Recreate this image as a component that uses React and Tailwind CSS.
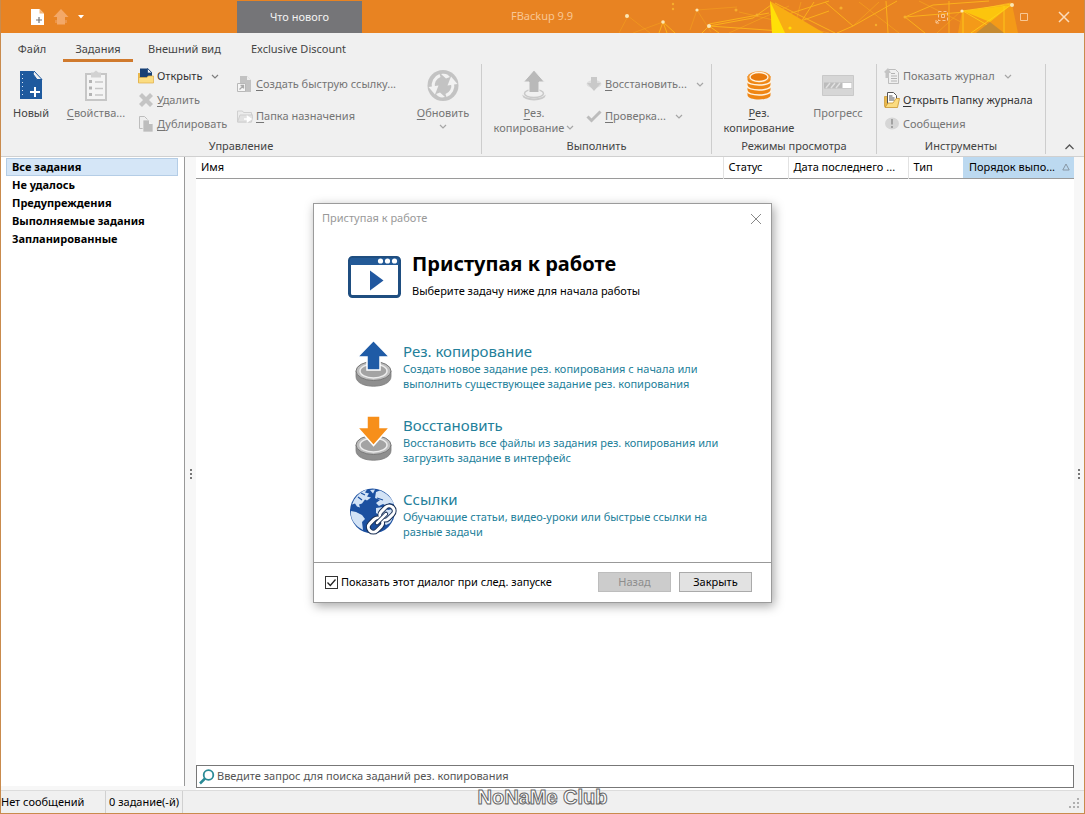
import React, { useState } from "react";

const smallIcon = "w-4 h-4 shrink-0";

const ChevronDown = ({ className = "" }) => (
  <svg viewBox="0 0 8 5" className={`w-2 h-[5px] shrink-0 ${className}`} fill="none" stroke="currentColor" strokeWidth="1.2">
    <path d="M1 1l3 3 3-3" />
  </svg>
);

const NewIcon = () => (
  <svg viewBox="0 0 32 32" className="w-8 h-8">
    <path d="M5 1h13l9 9v19H5z" fill="#1f5a9e" />
    <path d="M19 1l8 8.500h-5l-4-5.500z" fill="#f0f0f0" stroke="#1f5a9e" strokeWidth="1" />
    <path d="M7.500 4v24" stroke="#dfe8f3" strokeWidth="1" strokeDasharray="1 3" />
    <path d="M20 17v10M15 22h10" stroke="#fff" strokeWidth="2" />
  </svg>
);

const PropertiesIcon = () => (
  <svg viewBox="0 0 32 32" className="w-8 h-8" fill="none" stroke="#c6c6c6">
    <path d="M6 4h20v26H6z" fill="#f4f4f4" strokeWidth="2" />
    <path d="M11 2.500h2.500L16 .5l2.500 2H21v5H11z" fill="#d2d2d2" stroke="none" />
    <path d="M9 10h3v3H9zM9 16.500h3v3H9zM9 23h3v3H9z" fill="#b4b4b4" stroke="none" />
    <path d="M15 12h8M15 18.500h8M15 25h8" strokeWidth="1.300" />
  </svg>
);

const OpenIcon = () => (
  <svg viewBox="0 0 16 16" className={smallIcon}>
    <path d="M0 5h5l1 2v8H1L0 14z" fill="#e9b84c" />
    <path d="M2 .5h8l4 4V11H2z" fill="#163f75" />
    <path d="M9.500.5v4.500H14z" fill="#eef3f9" stroke="#163f75" strokeWidth=".7" />
    <path d="M.5 9.500h8l2-1.500h5V15H.5z" fill="#fbdc81" stroke="#dfae45" strokeWidth=".7" />
  </svg>
);

const DeleteIcon = () => (
  <svg viewBox="0 0 16 16" className={smallIcon}>
    <path d="M4 1l4 4 4-4 3 3-4 4 4 4-3 3-4-4-4 4-3-3 4-4-4-4z" fill="#c4c4c4" />
  </svg>
);

const DuplicateIcon = () => (
  <svg viewBox="0 0 16 16" className={smallIcon}>
    <path d="M1.500.5h5l3 3v9h-8z" fill="#eee" stroke="#bdbdbd" />
    <path d="M5 4h6l4 4v8H5z" fill="#bdbdbd" stroke="#f0f0f0" strokeWidth=".7" />
    <path d="M11 4v4h4z" fill="#f3f3f3" />
  </svg>
);

const ShortcutIcon = () => (
  <svg viewBox="0 0 16 16" className={smallIcon}>
    <path d="M3 0h7l4 4v12H3z" fill="#c2c2c2" />
    <path d="M10 0v4h4z" fill="#eee" />
    <path d="M.5 7.500h8v8h-8z" fill="#f6f6f6" stroke="#b8b8b8" />
    <path d="M2.500 13.500L6 10M3.500 9.500h3v3" fill="none" stroke="#aaa" strokeWidth="1.300" />
  </svg>
);

const TargetFolderIcon = () => (
  <svg viewBox="0 0 16 16" className={smallIcon}>
    <path d="M.5 3h5l1 1.500h8V14H.5z" fill="#ececec" stroke="#d0d0d0" />
    <path d="M.5 14L3 7h13l-1.500 7z" fill="#e2e2e2" stroke="#cfcfcf" />
    <path d="M7 11h5M10.500 8.500L14 11l-3.500 2.500z" fill="#fff" stroke="#fff" strokeWidth="1.500" />
  </svg>
);

const RefreshIcon = () => (
  <svg viewBox="0 0 32 32" className="w-8 h-8">
    <circle cx="16" cy="15.500" r="15.500" fill="#c3c3c3" />
    <path d="M13 5.500A10.500 10.500 0 0 0 6.500 18" fill="none" stroke="#f2f2f2" strokeWidth="3" />
    <path d="M1.500 17l10-1.500-3.500 9z" fill="#f2f2f2" />
    <path d="M19 25.500A10.500 10.500 0 0 0 25.500 13" fill="none" stroke="#f2f2f2" strokeWidth="3" />
    <path d="M30.500 14l-10 1.500 3.500-9z" fill="#f2f2f2" />
    <path d="M14 4c4-1 7 0 9 3l-4 1.500zM18 27c-4 1-7 0-9-3l4-1.500z" fill="#f2f2f2" />
  </svg>
);

const BackupGrayIcon = () => (
  <svg viewBox="0 0 32 32" className="w-8 h-8">
    <ellipse cx="16" cy="25.500" rx="11.500" ry="5" fill="#c9c9c9" />
    <ellipse cx="16" cy="23.500" rx="11.500" ry="5" fill="#f0f0f0" />
    <ellipse cx="16" cy="23.500" rx="9.500" ry="4" fill="none" stroke="#c9c9c9" strokeWidth="1.500" />
    <path d="M16 0l10.500 12H21v10.500H11V12H5.500z" fill="#b9b9b9" stroke="#f0f0f0" />
  </svg>
);

const RestoreGrayIcon = () => (
  <svg viewBox="0 0 16 16" className={smallIcon}>
    <ellipse cx="8" cy="8" rx="7.500" ry="4" fill="#dedede" />
    <path d="M5 1h6v6h4l-7 8-7-8h4z" fill="#c9c9c9" />
  </svg>
);

const CheckGrayIcon = () => (
  <svg viewBox="0 0 16 16" className={smallIcon}>
    <path d="M1.500 8.500l4 4L14.500 3.500" fill="none" stroke="#bcbcbc" strokeWidth="3" />
  </svg>
);

const DatabaseIcon = () => (
  <svg viewBox="0 0 32 32" className="w-8 h-8">
    <path d="M4.500 6v19c0 6 23 6 23 0V6z" fill="#ef8614" />
    <g fill="none" stroke="#fff3e0" strokeWidth="1.500">
      <path d="M4 10.500c0 6 24 6 24 0M4 15.500c0 6 24 6 24 0M4 20.500c0 6 24 6 24 0" />
    </g>
    <ellipse cx="16" cy="7" rx="11.500" ry="5.800" fill="#f2962f" />
    <ellipse cx="16" cy="7" rx="9" ry="4.500" fill="#e87a0c" stroke="#fff3e0" strokeWidth="1.300" />
  </svg>
);

const ProgressIcon = () => (
  <svg viewBox="0 0 32 32" className="w-8 h-8">
    <path d="M.5 5.500h31v20H.5z" fill="#d6d6d6" stroke="#c9c9c9" />
    <path d="M2 12.500h28v6H2z" fill="#bcbcbc" />
    <path d="M4 18l4-5M9 18l4-5M14 18l4-5" stroke="#e0e0e0" strokeWidth="1.500" />
    <path d="M20.500 13h9v5h-9z" fill="#fff" />
  </svg>
);

const LogIcon = () => (
  <svg viewBox="0 0 16 16" className={smallIcon}>
    <path d="M4.500 1.500h7l3 3v11h-10z" fill="#efefef" stroke="#bdbdbd" />
    <path d="M7 5.500h4M7 8h6M7 10.500h6M7 13h6" stroke="#b4b4b4" />
    <path d="M4 0L0 4l1.500 1v5H5V5h2z" fill="#c4c4c4" />
  </svg>
);

const LogFolderIcon = () => (
  <svg viewBox="0 0 16 16" className={smallIcon}>
    <path d="M.5 4.500h3v10h-3z" fill="#e9b84c" stroke="#c9952f" strokeWidth=".7" />
    <path d="M3.500.5h6l3 3v9h-9z" fill="#fff" stroke="#555" />
    <path d="M5 4h3.500M5 6h5.500M5 8h5.500" stroke="#555" />
    <path d="M1 15.500L4 11h5l3-4.500h3.500L13.500 15.500z" fill="#fbdc81" stroke="#c9952f" strokeWidth=".8" />
  </svg>
);

const MessageIcon = () => (
  <svg viewBox="0 0 16 16" className={smallIcon}>
    <ellipse cx="8" cy="7.500" rx="7" ry="6" fill="#d6d6d6" />
    <path d="M8 3v5.500M8 10v2" stroke="#a2a2a2" strokeWidth="2" />
  </svg>
);

const GettingStartedIcon = () => (
  <svg viewBox="0 0 53 42" className="w-[53px] h-[42px] shrink-0">
    <rect x="1.500" y="1.500" width="50" height="39" rx="3" fill="#fff" stroke="#1f4e80" strokeWidth="3" />
    <path d="M2 3.500Q2 2 3.500 2h46Q51 2 51 3.500V9H2z" fill="#235a97" />
    <circle cx="32.500" cy="5" r="2.600" fill="#fff" />
    <circle cx="39.500" cy="5" r="2.600" fill="#fff" />
    <circle cx="46.500" cy="5" r="2.600" fill="#fff" />
    <path d="M22 14.500v20l13.500-10z" fill="#2158a0" />
  </svg>
);

const Disk = () => (
  <g>
    <path d="M7 31v5.500c0 13 35 13 35 0V31z" fill="#8f8f8f" stroke="#7b7b7b" strokeWidth=".8" />
    <ellipse cx="24.500" cy="31" rx="17.500" ry="9.500" fill="#bdbdbd" stroke="#777" />
    <ellipse cx="24.500" cy="31" rx="13.500" ry="7" fill="#a3a3a3" stroke="#ececec" strokeWidth="1.500" />
  </g>
);

const BackupIcon = () => (
  <svg viewBox="0 0 48 48" className="w-12 h-12 shrink-0">
    <Disk />
    <path d="M24.500.5L40.500 17H31v13H18V17H8.500z" fill="#1f5ba6" stroke="#fff" strokeWidth="1.500" />
  </svg>
);

const RestoreIcon = () => (
  <svg viewBox="0 0 48 48" className="w-12 h-12 shrink-0">
    <Disk />
    <path d="M24.500 31.500L8.500 13.500H18V2h13v11.500h9.500z" fill="#f78f1a" stroke="#fff" strokeWidth="1.500" />
  </svg>
);

const LinksIcon = () => (
  <svg viewBox="0 0 48 48" className="w-12 h-12 shrink-0">
    <circle cx="23.500" cy="23" r="22.500" fill="#1c50a0" />
    <g fill="#d3e3f6">
      <path d="M5 12C9 6 13 3 18 1.500l-2 3 4 1-2 3 4 1-4 3-2-1-3 4-3 1 1 3-3-1-2-3-3 1z" />
      <path d="M2 23l5 1 6 3 3 4-3 3 1 8C6 38 1 31 2 23z" />
      <path d="M27 4l4-1.500C37 5 42 9 45 16l-5-1-2 3-4-2-4 2-3-3 4-3-5-2z" />
      <path d="M27 20l7-1 5 3 5-1c1 5 0 10-3 14l-4 2-4-4-1-5-5-3z" />
      <path d="M21 2l5-.5-2 4z" />
    </g>
    <path d="M12 5l4 2M28 10l6 2M9 9l4 3" stroke="#1c50a0" strokeWidth="1.200" />
    <g fill="none">
      <g stroke="#1b3156" strokeWidth="5">
        <rect x="33" y="17" width="10" height="16" rx="5" transform="rotate(45 38 25)" />
        <rect x="21.500" y="29" width="10" height="16" rx="5" transform="rotate(45 26.500 37)" />
      </g>
      <g stroke="#fff" strokeWidth="3">
        <rect x="33" y="17" width="10" height="16" rx="5" transform="rotate(45 38 25)" />
        <rect x="21.500" y="29" width="10" height="16" rx="5" transform="rotate(45 26.500 37)" />
      </g>
      <path d="M28 35l9-9" stroke="#1b3156" strokeWidth="4.500" strokeLinecap="round" />
      <path d="M28 35l9-9" stroke="#fff" strokeWidth="2.500" strokeLinecap="round" />
    </g>
  </svg>
);

const TitleArt = () => (
  <svg viewBox="0 0 465 33" className="absolute right-0 top-0 w-[465px] h-[33px]" fill="none">
    <g stroke="#fbb01c" strokeWidth="1">
      <path d="M0 33l9-17 22 17M44 22l-30 11M78 10l-7 20M78 10l14 22M78 10l40-3" opacity=".4" />
      <path d="M40 33l4-11 4 11M44 22l12 11M90 26l44-8 18-13M90 26l72 5M90 26l-7 7M90 26l10 7M90 24l60-11" />
      <path d="M162 28l48-17M156 3l60 30M175 33l20-31M160 17l50-16M206 2l28 24 44-25M234 26l-16 7M267 1l2 32M286 17l28-12 56-4M286 17l20 16M286 17l60-5 46-9M330 1v32" />
      <path d="M110 33l60-27M120 12l90 21M182 2l-8 30M240 2l40 31M300 1l60 30M318 33l24-22M234 26l26-24" opacity=".5" />
    </g>
    <path d="M151 1l54 32h-52z" fill="#f8ad13" />
    <path d="M151 1l15 32h-13z" fill="#ffe007" />
    <path d="M343 11l50-7 6 29h-60z" fill="#f49a18" />
    <path d="M344 11l48-6-21 17z" fill="#fcc50d" />
    <path d="M344 11v22M385 6v27M344 11l38 22M392 5l-40 28M343 11l50-7" stroke="#ffd21c" strokeWidth=".8" />
    <path d="M371 22l14 11h-28z" fill="#c58a32" />
    <g fill="#fbe7b6">
      <circle cx="8" cy="16" r="2" />
      <circle cx="44" cy="22" r="1.800" />
      <circle cx="78" cy="10" r="1.600" />
      <circle cx="90" cy="26" r="2" />
      <circle cx="343" cy="11" r="1.600" />
      <circle cx="393" cy="5" r="2" />
    </g>
    <g fill="#f6ae2d">
      <circle cx="54" cy="4" r="1.200" />
      <circle cx="54" cy="9" r="1.200" />
      <circle cx="117" cy="10" r="1.500" />
      <circle cx="138" cy="15" r="1.500" />
      <circle cx="222" cy="8" r="1.600" />
      <circle cx="286" cy="17" r="1.500" />
      <circle cx="257" cy="25" r="1.200" />
      <circle cx="171" cy="28" r="1.600" fill="#ffe007" />
    </g>
  </svg>
);

// first letter is the keyboard mnemonic
const Mnemonic = ({ text }) => (
  <span>
    <span className="underline underline-offset-2">{text[0]}</span>
    {text.slice(1)}
  </span>
);

const LargeButton = ({ icon, children, disabled, className = "" }) => (
  <button
    type="button"
    disabled={disabled}
    className={`flex flex-col items-center shrink-0 pt-1.5 leading-[15px] text-[#444] disabled:text-[#757575] ${className}`}
  >
    <span className="mb-[3px]">{icon}</span>
    {children}
  </button>
);

const RowButton = ({ icon, children, disabled, arrow, className = "h-6" }) => (
  <button
    type="button"
    disabled={disabled}
    className={`flex items-center gap-[3px] whitespace-nowrap text-[#333] disabled:text-[#757575] ${className}`}
  >
    {icon}
    {children}
    {arrow && <ChevronDown className="ml-1.5 opacity-60" />}
  </button>
);

const RibbonGroup = ({ title, children, className = "" }) => (
  <section className={`flex flex-col shrink-0 border-r border-[#cdcdcd] ${className}`}>
    <div className="flex h-[74px]">{children}</div>
    <h2 className="h-4 leading-4 text-center text-[#444]">{title}</h2>
  </section>
);

const TitleBar = () => (
  <header className="relative flex items-stretch h-[33px] shrink-0 bg-[#e88322] text-[#f8c795]">
    <TitleArt />
    <div className="flex items-center w-[236px] pl-[30px] gap-2 shrink-0">
      <button type="button" aria-label="Новое задание">
        <svg viewBox="0 0 13 16" className="w-[13px] h-4">
          <path d="M0 0h8.500L13 4.500V16H0z" fill="#fff" />
          <path d="M8.500 0v4.500H13z" fill="#f3b77c" />
          <path d="M8 8v6M5 11h6" stroke="#777" strokeWidth="1.200" />
        </svg>
      </button>
      <button type="button" aria-label="Запуск">
        <svg viewBox="0 0 18 16" className="w-[18px] h-4">
          <path d="M3 11h12v3H3z" fill="#ec9548" />
          <path d="M9 0l7.500 8H13v7.500H5V8H1.500z" fill="#f3a868" />
        </svg>
      </button>
      <button type="button" aria-label="Настройка панели">
        <svg viewBox="0 0 6 4" className="w-[6px] h-1">
          <path d="M0 0h6L3 3.500z" fill="#fff" />
        </svg>
      </button>
    </div>
    <button type="button" className="w-[125px] shrink-0 mt-px bg-[#757578] text-[#f2f2f2]">
      Что нового
    </button>
    <h1 className="relative flex-1 flex items-center pl-[149px]">FBackup 9.9</h1>
    <div className="relative flex items-center gap-[30px] pr-[14px]">
      <button type="button" aria-label="Свернуть">
        <svg viewBox="0 0 14 14" className="w-[14px] h-[14px]" fill="none" stroke="#f8c795">
          <path d="M3.500 1.500h9v9h-9z" strokeDasharray="3 2" />
          <path d="M6.500 4.500h3v3h-3zM1 13l3-3M1 10v3h3" />
        </svg>
      </button>
      <span className="w-[11px]" />
      <button type="button" aria-label="Развернуть">
        <svg viewBox="0 0 8 8" className="w-2 h-2" fill="none" stroke="#f8c795">
          <path d="M.5.5h7v7h-7z" />
        </svg>
      </button>
      <button type="button" aria-label="Закрыть окно">
        <svg viewBox="0 0 12 12" className="w-3 h-3" fill="none" stroke="#fbdcbc" strokeWidth="1.500">
          <path d="M1 1l10 10M11 1L1 11" />
        </svg>
      </button>
    </div>
  </header>
);

const TabBar = () => (
  <nav className="flex h-[29px] shrink-0 text-[#444]">
    <button type="button" className="w-[62px] pt-[3px]">Файл</button>
    <button type="button" className="w-[70px] border-b-[3px] border-[#d07a2d] pt-1.5">Задания</button>
    <button type="button" className="w-[103px] pt-[3px]">Внешний вид</button>
    <button type="button" className="w-[125px] pt-[3px]">Exclusive Discount</button>
  </nav>
);

const Ribbon = () => (
  <div className="flex shrink-0 pt-0.5 pb-0.5 border-b border-[#d0d0d0]">
    <RibbonGroup title="Управление" className="w-[481px]">
      <LargeButton className="w-[60px]" icon={<NewIcon />}>Новый</LargeButton>
      <LargeButton className="w-[70px]" icon={<PropertiesIcon />} disabled>
        <Mnemonic text="Свойства..." />
      </LargeButton>
      <div className="w-[100px] pl-[7px] shrink-0">
        <RowButton icon={<OpenIcon />} arrow>Открыть</RowButton>
        <RowButton icon={<DeleteIcon />} disabled><Mnemonic text="Удалить" /></RowButton>
        <RowButton icon={<DuplicateIcon />} disabled><Mnemonic text="Дублировать" /></RowButton>
      </div>
      <div className="w-[177px] pl-1.5 pt-1 shrink-0">
        <RowButton className="h-8" icon={<ShortcutIcon />} disabled><Mnemonic text="Создать быструю ссылку..." /></RowButton>
        <RowButton className="h-8" icon={<TargetFolderIcon />} disabled><Mnemonic text="Папка назначения" /></RowButton>
      </div>
      <LargeButton className="w-[70px]" icon={<RefreshIcon />} disabled>
        <Mnemonic text="Обновить" />
        <ChevronDown className="mt-1 opacity-60" />
      </LargeButton>
    </RibbonGroup>

    <RibbonGroup title="Выполнить" className="w-[230px]">
      <LargeButton className="w-[104px]" icon={<BackupGrayIcon />} disabled>
        <Mnemonic text="Рез." />
        <span className="flex items-center gap-0.5">
          копирование <ChevronDown className="opacity-60" />
        </span>
      </LargeButton>
      <div className="pt-1">
        <RowButton className="h-8" icon={<RestoreGrayIcon />} disabled arrow><Mnemonic text="Восстановить..." /></RowButton>
        <RowButton className="h-8" icon={<CheckGrayIcon />} disabled arrow><Mnemonic text="Проверка..." /></RowButton>
      </div>
    </RibbonGroup>

    <RibbonGroup title="Режимы просмотра" className="w-[165px]">
      <LargeButton className="w-[94px]" icon={<DatabaseIcon />}>
        <Mnemonic text="Рез." />
        <span>копирование</span>
      </LargeButton>
      <LargeButton className="w-[64px]" icon={<ProgressIcon />} disabled>Прогресс</LargeButton>
    </RibbonGroup>

    <RibbonGroup title="Инструменты" className="w-[169px]">
      <div className="pl-[7px]">
        <RowButton icon={<LogIcon />} disabled arrow>Показать журнал</RowButton>
        <RowButton icon={<LogFolderIcon />}><Mnemonic text="Открыть Папку журнала" /></RowButton>
        <RowButton icon={<MessageIcon />} disabled>Сообщения</RowButton>
      </div>
    </RibbonGroup>

    <button type="button" aria-label="Свернуть ленту" className="ml-auto mr-[10px] self-end pb-1 text-[#555]">
      <svg viewBox="0 0 9 6" className="w-[9px] h-[6px]" fill="none" stroke="currentColor" strokeWidth="1.300">
        <path d="M.5 5l4-4 4 4" />
      </svg>
    </button>
  </div>
);

const filters = ["Все задания", "Не удалось", "Предупреждения", "Выполняемые задания", "Запланированные"];

const Grip = () => (
  <span className="flex flex-col gap-0.5">
    <span className="w-0.5 h-0.5 bg-[#777]" />
    <span className="w-0.5 h-0.5 bg-[#777]" />
    <span className="w-0.5 h-0.5 bg-[#777]" />
  </span>
);

const Sidebar = ({ active, onSelect }) => (
  <aside className="w-[184px] shrink-0 mb-1 pt-px border-r border-[#999] bg-white pl-[5px] pr-[6px]">
    {filters.map((name) => (
      <button
        type="button"
        key={name}
        onClick={() => onSelect(name)}
        className={`block w-full h-[18px] pl-[5px] text-left font-bold leading-4 text-black border ${
          active === name ? "bg-[#d5e6f7] border-[#b4cde6]" : "border-transparent"
        }`}
      >
        {name}
      </button>
    ))}
  </aside>
);

const TaskTable = () => (
  <table className="w-full table-fixed border-collapse text-left text-black">
    <thead>
      <tr className="h-[21px] border-b border-[#9a9a9a] leading-4">
        <th className="font-normal pl-[5px]">Имя</th>
        <th className="font-normal w-[65px] pl-[5px] border-l border-[#e2e2e2]">Статус</th>
        <th className="font-normal w-[120px] pl-[5px] border-l border-[#e2e2e2] whitespace-nowrap">Дата последнего ...</th>
        <th className="font-normal w-[55px] pl-[5px] border-l border-[#e2e2e2]">Тип</th>
        <th className="font-normal w-[111px] pl-1.5 bg-[#bcd9f0] whitespace-nowrap">
          <span className="flex items-center gap-[7px]">
            Порядок выпо...
            <svg viewBox="0 0 8 8" className="w-2 h-2 shrink-0" fill="none" stroke="#8796a3">
              <path d="M.8 7L4 1l3.200 6z" />
            </svg>
          </span>
        </th>
      </tr>
    </thead>
    <tbody />
  </table>
);

const SearchBox = () => (
  <div className="flex items-center h-[23px] mt-auto mb-0.5 border border-[#777] bg-white pl-0.5">
    <svg viewBox="0 0 16 16" className={smallIcon} fill="none" stroke="#2a8a96">
      <circle cx="9.500" cy="6" r="4.800" strokeWidth="1.800" />
      <path d="M6 9.500l-5 5" strokeWidth="2.500" />
    </svg>
    <input
      type="text"
      aria-label="Поиск заданий"
      placeholder="Введите запрос для поиска заданий рез. копирования"
      className="flex-1 min-w-0 pl-0.5 outline-none placeholder:text-[#555]"
    />
  </div>
);

const StatusBar = () => (
  <footer className="flex items-center h-[23px] shrink-0 border-t border-[#dcdcdc] bg-[#f0f0f0] text-black">
    <span className="w-[104px]">Нет сообщений</span>
    <span className="flex items-center h-full px-[3px] border-x border-[#d0d0d0]">0 задание(-й)</span>
    <svg viewBox="0 0 12 12" className="w-3 h-3 ml-auto mr-1 self-end mb-1" fill="#b0b0b0">
      <path d="M9 1h2v2H9zM9 5h2v2H9zM5 5h2v2H5zM9 9h2v2H9zM5 9h2v2H5zM1 9h2v2H1z" />
    </svg>
  </footer>
);

const tasks = [
  {
    icon: <BackupIcon />,
    title: "Рез. копирование",
    lines: ["Создать новое задание рез. копирования с начала или", "выполнить существующее задание рез. копирования"],
  },
  {
    icon: <RestoreIcon />,
    title: "Восстановить",
    lines: ["Восстановить все файлы из задания рез. копирования или", "загрузить задание в интерфейс"],
  },
  {
    icon: <LinksIcon />,
    title: "Ссылки",
    lines: ["Обучающие статьи, видео-уроки или быстрые ссылки на", "разные задачи"],
  },
];

const StartDialog = ({ onClose }) => {
  const [showAgain, setShowAgain] = useState(true);

  return (
    <div role="dialog" aria-label="Приступая к работе" className="w-[459px] border border-[#9b9b9b] bg-white shadow-[2px_3px_10px_rgba(0,0,0,0.35)]">
      <div className="flex items-center justify-between h-[30px] pl-2 pr-[10px] text-[#999]">
        <span>Приступая к работе</span>
        <button type="button" aria-label="Закрыть диалог" onClick={onClose}>
          <svg viewBox="0 0 10 10" className="w-[10px] h-[10px]" fill="none" stroke="#888">
            <path d="M0 0l10 10M10 0L0 10" />
          </svg>
        </button>
      </div>

      <div className="flex gap-[11px] pl-[34px] pt-[18px]">
        <div className="pt-1">
          <GettingStartedIcon />
        </div>
        <div>
          <h2 className="text-[20px] leading-6 font-bold text-black">Приступая к работе</h2>
          <p className="mt-1.5 leading-[18px] text-black">Выберите задачу ниже для начала работы</p>
        </div>
      </div>

      <ul className="flex flex-col gap-6 pl-[35px] pt-10">
        {tasks.map((task) => (
          <li key={task.title}>
            <a href="#" className="flex gap-1.5 h-[50px] text-[#23809a]">
              {task.icon}
              <span className="whitespace-nowrap pt-px">
                <span className="block text-[15px] leading-5">{task.title}</span>
                <span className="block leading-[15px]">{task.lines[0]}</span>
                <span className="block leading-[15px]">{task.lines[1]}</span>
              </span>
            </a>
          </li>
        ))}
      </ul>

      <div className="flex items-center gap-2 h-10 mt-6 pl-[11px] pr-[19px] border-t border-[#999]">
        <label className="flex items-center gap-[3px] mr-auto text-black whitespace-nowrap">
          <span className="relative flex w-[13px] h-[13px]">
            <input
              type="checkbox"
              checked={showAgain}
              onChange={(e) => setShowAgain(e.target.checked)}
              className="peer appearance-none w-[13px] h-[13px] border border-[#333] bg-white"
            />
            <svg viewBox="0 0 13 13" className="absolute inset-0 hidden peer-checked:block pointer-events-none" fill="none" stroke="#222" strokeWidth="1.300">
              <path d="M2.500 6.500l2.800 3L10.500 3.500" />
            </svg>
          </span>
          Показать этот диалог при след. запуске
        </label>
        <button type="button" disabled className="w-[73px] h-5 border border-[#bdbdbd] bg-[#cccccc] text-[#8d8d8d]">
          Назад
        </button>
        <button type="button" onClick={onClose} className="w-[73px] h-5 border border-[#aaa] bg-[#e2e2e2] text-black">
          Закрыть
        </button>
      </div>
    </div>
  );
};

export default function App() {
  const [filter, setFilter] = useState(filters[0]);
  const [dialogOpen, setDialogOpen] = useState(true);

  return (
    <div className="relative flex flex-col min-h-screen border-x border-b border-[#c98b4d] bg-[#f0f0f0] font-['Noto_Sans','Open_Sans',sans-serif] text-[11px]">
      <TitleBar />
      <TabBar />
      <Ribbon />

      <main className="flex flex-1 bg-[#f7f7f7]">
        <Sidebar active={filter} onSelect={setFilter} />
        <div className="flex items-center justify-center w-[11px] shrink-0">
          <Grip />
        </div>
        <div className="flex flex-col flex-1 min-w-0 bg-white">
          <TaskTable />
          <SearchBox />
        </div>
        <div className="flex items-center justify-center w-[10px] shrink-0">
          <Grip />
        </div>
      </main>

      <StatusBar />

      {dialogOpen && (
        <div className="absolute inset-0 pb-2 flex items-center justify-center">
          <StartDialog onClose={() => setDialogOpen(false)} />
        </div>
      )}

      <div className="absolute inset-x-0 bottom-1 text-center text-[20px] leading-6 text-white font-['Liberation_Sans',sans-serif] font-bold pointer-events-none [-webkit-text-stroke:1px_#666]">
        NoNaMe Club
      </div>
    </div>
  );
}
